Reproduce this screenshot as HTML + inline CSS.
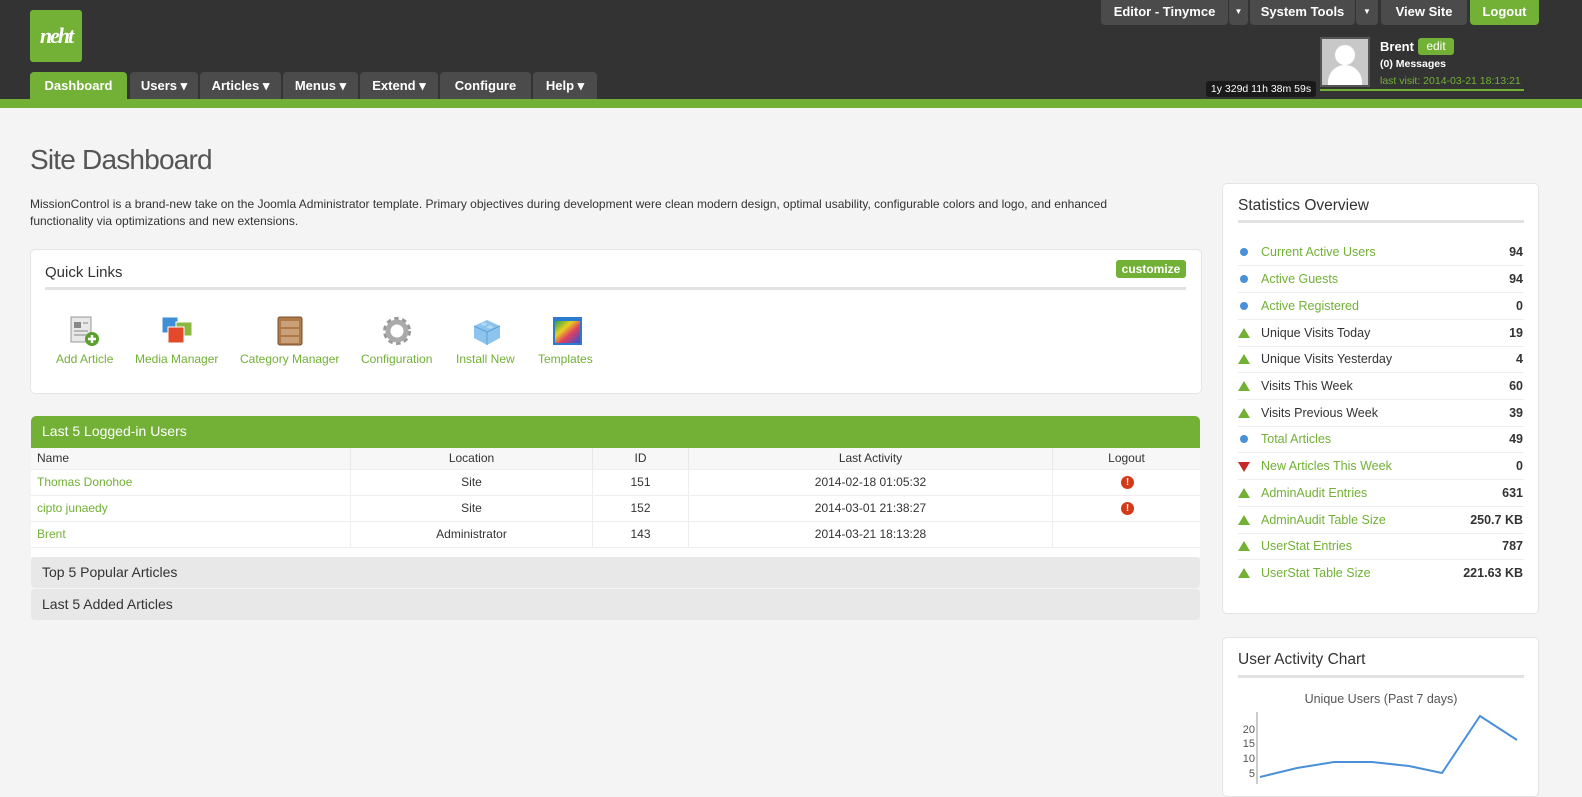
<!DOCTYPE html>
<html><head><meta charset="utf-8"><style>
*{box-sizing:border-box;margin:0;padding:0}
body{width:1582px;height:784px;overflow:hidden;background:#f4f4f4;font-family:"Liberation Sans",Arial,sans-serif;font-size:12px;color:#333;position:relative}
.a{position:absolute}
.hdr{left:0;top:0;width:1582px;height:99px;background:#333}
.gbar{left:0;top:99px;width:1582px;height:9px;background:#72b136}
.tab{top:72px;height:27px;background:#4b4b4b;color:#fff;font-weight:bold;font-size:13px;line-height:28px;text-align:center;border-radius:4px 4px 0 0;font-family:"Liberation Sans Narrow","Liberation Sans",sans-serif}
.tb{top:0;height:25px;background:#4b4b4b;color:#fff;font-weight:bold;font-size:13px;line-height:24px;text-align:center;border-radius:0 0 4px 4px}
.panel{background:#fff;border:1px solid #e4e4e4;border-radius:5px}
.g{color:#72b136}
.ql{top:352px;color:#72b136;font-size:12px;text-align:center}
.row{left:1238px;width:286px;height:27px;border-bottom:1px solid #eee;font-size:12.5px;line-height:26px}
.row .n{position:absolute;left:23px}
.row .v{position:absolute;right:1px;font-weight:bold;color:#333}
.dot{position:absolute;left:2px;top:9px;width:8px;height:8px;border-radius:50%;background:#4a90d9}
.up{position:absolute;left:0;top:8px;width:0;height:0;border-left:6px solid transparent;border-right:6px solid transparent;border-bottom:10px solid #72b136}
.dn{position:absolute;left:0;top:9px;width:0;height:0;border-left:6px solid transparent;border-right:6px solid transparent;border-top:10px solid #c62828}
.trow{left:31px;width:1169px;height:26px;border-bottom:1px solid #eee;background:#fff;line-height:25px}
.c{position:absolute;text-align:center;top:0;height:100%}
.ex{position:absolute;left:1090px;top:6px;width:13px;height:13px;border-radius:50%;background:#d43a1a;color:#fff;font-size:10px;font-weight:bold;line-height:13px;text-align:center}
</style></head><body>
<div class="a hdr"></div>
<div class="a gbar"></div>
<div class="a" style="left:30px;top:10px;width:52px;height:52px;background:#72b136;border-radius:3px;color:#fff;font:italic bold 22px 'Liberation Serif',serif;line-height:52px;text-align:center;letter-spacing:-2px">neht</div>
<div class="a tab" style="left:30px;width:97px;background:#72b136">Dashboard</div>
<div class="a tab" style="left:130px;width:68px">Users ▾</div>
<div class="a tab" style="left:200px;width:81px">Articles ▾</div>
<div class="a tab" style="left:283px;width:75px">Menus ▾</div>
<div class="a tab" style="left:360px;width:78px">Extend ▾</div>
<div class="a tab" style="left:440px;width:91px">Configure</div>
<div class="a tab" style="left:533px;width:64px">Help ▾</div>

<div class="a tb" style="left:1101px;width:127px">Editor - Tinymce</div>
<div class="a tb" style="left:1229px;width:19px;font-size:8px">▼</div>
<div class="a tb" style="left:1250px;width:105px">System Tools</div>
<div class="a tb" style="left:1356px;width:22px;font-size:8px">▼</div>
<div class="a tb" style="left:1381px;width:86px">View Site</div>
<div class="a tb" style="left:1470px;width:69px;background:#72b136">Logout</div>

<div class="a" style="left:1320px;top:37px;width:50px;height:50px;border:2px solid #555;background:#c8c8c8;overflow:hidden">
<div class="a" style="left:13px;top:6px;width:20px;height:20px;border-radius:50%;background:#fff"></div>
<div class="a" style="left:6px;top:26px;width:34px;height:30px;border-radius:17px 17px 0 0;background:#fff"></div></div>
<div class="a" style="left:1380px;top:39px;color:#fff;font-weight:bold;font-size:13px">Brent</div>
<div class="a" style="left:1418px;top:38px;width:36px;height:17px;background:#72b136;border-radius:3px;color:#fff;font-size:12px;text-align:center;line-height:17px">edit</div>
<div class="a" style="left:1380px;top:58px;color:#fff;font-weight:bold;font-size:10.5px">(0) Messages</div>
<div class="a g" style="left:1380px;top:75px;font-size:10.5px">last visit: 2014-03-21 18:13:21</div>
<div class="a" style="left:1320px;top:89px;width:204px;height:2px;background:#72b136"></div>
<div class="a" style="left:1206px;top:81px;width:110px;height:16px;background:#1a1a1a;border-radius:3px;color:#fff;font-size:10.5px;text-align:center;line-height:16px">1y 329d 11h 38m 59s</div>

<div class="a" style="left:30px;top:144px;font-size:28px;color:#555;letter-spacing:-0.8px">Site Dashboard</div>
<div class="a" style="left:30px;top:196px;width:1120px;font-size:12px;line-height:17px;color:#333">MissionControl is a brand-new take on the Joomla Administrator template. Primary objectives during development were clean modern design, optimal usability, configurable colors and logo, and enhanced<br>functionality via optimizations and new extensions.</div>

<div class="a panel" style="left:30px;top:249px;width:1172px;height:145px"></div>
<div class="a" style="left:45px;top:264px;font-size:15px;color:#333">Quick Links</div>
<div class="a" style="left:1116px;top:260px;width:70px;height:18px;background:#72b136;border-radius:3px;color:#fff;font-size:12px;font-weight:bold;text-align:center;line-height:18px">customize</div>
<div class="a" style="left:45px;top:287px;width:1141px;height:3px;background:#e2e2e2"></div>

<svg class="a" style="left:68px;top:315px" width="34" height="32"><rect x="3" y="2" width="20" height="25" fill="#e8e8e8" stroke="#999"/><rect x="6" y="7" width="7" height="6" fill="#888"/><line x1="15" y1="8" x2="20" y2="8" stroke="#888"/><line x1="6" y1="16" x2="20" y2="16" stroke="#888"/><line x1="6" y1="20" x2="18" y2="20" stroke="#888"/><circle cx="24" cy="24" r="7" fill="#5aa02c"/><path d="M24 20v8M20 24h8" stroke="#fff" stroke-width="2.5"/></svg>
<svg class="a" style="left:160px;top:315px" width="34" height="32"><rect x="2" y="2" width="16" height="16" fill="#3f8fd6" stroke="#fff"/><rect x="16" y="7" width="16" height="14" fill="#8ab840" stroke="#fff"/><rect x="8" y="12" width="16" height="16" fill="#e5492b" stroke="#fff"/></svg>
<svg class="a" style="left:274px;top:315px" width="32" height="32"><rect x="4" y="2" width="24" height="28" rx="2" fill="#b07a48" stroke="#7a4f2a"/><rect x="7" y="6" width="18" height="6" fill="#caa078"/><rect x="7" y="14" width="18" height="6" fill="#caa078"/><rect x="7" y="22" width="18" height="6" fill="#caa078"/></svg>
<svg class="a" style="left:381px;top:315px" width="32" height="32"><circle cx="16" cy="16" r="11" fill="none" stroke="#999" stroke-width="6" stroke-dasharray="4 3"/><circle cx="16" cy="16" r="9" fill="none" stroke="#aaa" stroke-width="5"/><circle cx="16" cy="16" r="4" fill="#fff"/></svg>
<svg class="a" style="left:470px;top:315px" width="34" height="32"><path d="M17 5L30 11V23L17 30L4 23V11Z" fill="#8cc4ee"/><path d="M4 11L17 17L30 11" fill="none" stroke="#5c9fd6"/><line x1="17" y1="17" x2="17" y2="30" stroke="#5c9fd6"/><ellipse cx="14" cy="9" rx="3" ry="1.5" fill="#b3daf6"/><ellipse cx="20" cy="12" rx="3" ry="1.5" fill="#b3daf6"/></svg>
<svg class="a" style="left:552px;top:315px" width="32" height="32"><defs><linearGradient id="rb" x1="0" x2="1" y1="0" y2="1"><stop offset="0" stop-color="#2a9f4a"/><stop offset=".35" stop-color="#e8d020"/><stop offset=".6" stop-color="#e04060"/><stop offset="1" stop-color="#3050d0"/></linearGradient></defs><rect x="1" y="2" width="29" height="28" fill="#2b7cd0"/><rect x="3" y="6" width="25" height="22" fill="url(#rb)"/></svg>

<div class="a ql" style="left:56px">Add Article</div>
<div class="a ql" style="left:135px">Media Manager</div>
<div class="a ql" style="left:240px">Category Manager</div>
<div class="a ql" style="left:361px">Configuration</div>
<div class="a ql" style="left:456px">Install New</div>
<div class="a ql" style="left:538px">Templates</div>

<div class="a" style="left:31px;top:416px;width:1169px;height:32px;background:#72b136;border-radius:5px 5px 0 0;color:#fff;font-size:14px;line-height:31px;padding-left:11px">Last 5 Logged-in Users</div>
<div class="a trow" style="top:448px;height:22px;background:#f7f7f7;line-height:21px">
<div class="c" style="left:6px">Name</div>
<div class="c" style="left:319px;width:242px;border-left:1px solid #e8e8e8">Location</div>
<div class="c" style="left:561px;width:96px;border-left:1px solid #e8e8e8">ID</div>
<div class="c" style="left:657px;width:365px;border-left:1px solid #e8e8e8;border-right:1px solid #e8e8e8">Last Activity</div>
<div class="c" style="left:1022px;width:147px">Logout</div></div>
<div class="a trow" style="top:470px"><div class="c g" style="left:6px">Thomas Donohoe</div><div class="c" style="left:319px;width:242px;border-left:1px solid #eee">Site</div><div class="c" style="left:561px;width:96px;border-left:1px solid #eee">151</div><div class="c" style="left:657px;width:365px;border-left:1px solid #eee;border-right:1px solid #eee">2014-02-18 01:05:32</div><div class="ex">!</div></div>
<div class="a trow" style="top:496px"><div class="c g" style="left:6px">cipto junaedy</div><div class="c" style="left:319px;width:242px;border-left:1px solid #eee">Site</div><div class="c" style="left:561px;width:96px;border-left:1px solid #eee">152</div><div class="c" style="left:657px;width:365px;border-left:1px solid #eee;border-right:1px solid #eee">2014-03-01 21:38:27</div><div class="ex">!</div></div>
<div class="a trow" style="top:522px"><div class="c g" style="left:6px">Brent</div><div class="c" style="left:319px;width:242px;border-left:1px solid #eee">Administrator</div><div class="c" style="left:561px;width:96px;border-left:1px solid #eee">143</div><div class="c" style="left:657px;width:365px;border-left:1px solid #eee;border-right:1px solid #eee">2014-03-21 18:13:28</div></div>
<div class="a" style="left:31px;top:548px;width:1169px;height:9px;background:#fff"></div>
<div class="a" style="left:31px;top:557px;width:1169px;height:31px;background:#e8e8e8;border-radius:4px;font-size:14px;line-height:31px;padding-left:11px">Top 5 Popular Articles</div>
<div class="a" style="left:31px;top:589px;width:1169px;height:31px;background:#e8e8e8;border-radius:4px;font-size:14px;line-height:31px;padding-left:11px">Last 5 Added Articles</div>

<div class="a panel" style="left:1222px;top:183px;width:317px;height:431px"></div>
<div class="a" style="left:1238px;top:197px;font-size:15.5px;color:#333">Statistics Overview</div>
<div class="a" style="left:1238px;top:220px;width:286px;height:3px;background:#e2e2e2"></div>
<div class="a row" style="top:239px"><span class="dot"></span><span class="n g">Current Active Users</span><span class="v">94</span></div>
<div class="a row" style="top:266px"><span class="dot"></span><span class="n g">Active Guests</span><span class="v">94</span></div>
<div class="a row" style="top:293px"><span class="dot"></span><span class="n g">Active Registered</span><span class="v">0</span></div>
<div class="a row" style="top:320px"><span class="up"></span><span class="n">Unique Visits Today</span><span class="v">19</span></div>
<div class="a row" style="top:346px"><span class="up"></span><span class="n">Unique Visits Yesterday</span><span class="v">4</span></div>
<div class="a row" style="top:373px"><span class="up"></span><span class="n">Visits This Week</span><span class="v">60</span></div>
<div class="a row" style="top:400px"><span class="up"></span><span class="n">Visits Previous Week</span><span class="v">39</span></div>
<div class="a row" style="top:426px"><span class="dot"></span><span class="n g">Total Articles</span><span class="v">49</span></div>
<div class="a row" style="top:453px"><span class="dn"></span><span class="n g">New Articles This Week</span><span class="v">0</span></div>
<div class="a row" style="top:480px"><span class="up"></span><span class="n g">AdminAudit Entries</span><span class="v">631</span></div>
<div class="a row" style="top:507px"><span class="up"></span><span class="n g">AdminAudit Table Size</span><span class="v">250.7 KB</span></div>
<div class="a row" style="top:533px"><span class="up"></span><span class="n g">UserStat Entries</span><span class="v">787</span></div>
<div class="a row" style="top:560px;border:none"><span class="up"></span><span class="n g">UserStat Table Size</span><span class="v">221.63 KB</span></div>

<div class="a panel" style="left:1222px;top:637px;width:317px;height:160px"></div>
<div class="a" style="left:1238px;top:651px;font-size:15.5px;color:#333">User Activity Chart</div>
<div class="a" style="left:1238px;top:675px;width:286px;height:3px;background:#e2e2e2"></div>
<div class="a" style="left:1238px;top:692px;width:286px;text-align:center;font-size:12.5px;color:#555">Unique Users (Past 7 days)</div>
<svg class="a" style="left:1222px;top:710px" width="317" height="74">
<line x1="35" y1="2" x2="35" y2="74" stroke="#999"/>
<g font-family="Liberation Sans" font-size="11" fill="#555" text-anchor="end"><text x="33" y="23">20</text><text x="33" y="37">15</text><text x="33" y="52">10</text><text x="33" y="67">5</text></g>
<path d="M38 67L75 58L112 52L150 52L187 56L220 63L258 6L295 30" fill="none" stroke="#4a90d9" stroke-width="2"/>
</svg>
</body></html>
